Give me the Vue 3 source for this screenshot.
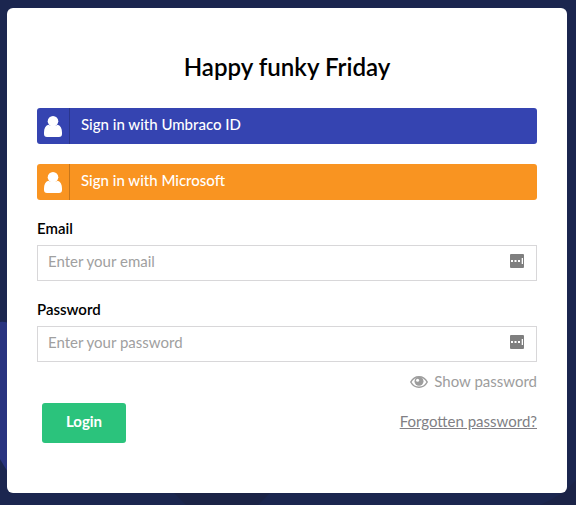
<script setup>
const providers = [
  { name: 'Umbraco ID', tone: 'indigo' },
  { name: 'Microsoft', tone: 'orange' },
]
const fields = [
  { id: 'email', label: 'Email', type: 'email', hint: 'Enter your email' },
  { id: 'password', label: 'Password', type: 'password', hint: 'Enter your password' },
]
</script>

<template>
  <div class="page">
    <svg class="backdrop" viewBox="0 0 576 505" aria-hidden="true">
      <path d="M0 322Q5 321 10 324V475Q5 468 0 459Z" fill="#293480" />
      <path d="M174 493H270L258 505H186Z" fill="#1b2346" />
      <path d="M540 505Q562 496 576 480V505Z" fill="#1b2347" />
    </svg>
    <main class="card">
      <h1>Happy funky Friday</h1>
      <div class="providers">
        <button v-for="p in providers" :key="p.name" class="provider" :class="p.tone" type="button">
          <span class="provider-icon">
            <svg width="18" height="21" viewBox="0 0 18 21" fill="#fff">
              <path d="M4.2 8.7Q9 11.4 13.8 8.7C16.6 9.6 18 12.6 18 16.6V18Q18 21 15 21H3Q0 21 0 18V16.6C0 12.6 1.4 9.6 4.2 8.7Z" />
              <ellipse cx="9" cy="5.3" rx="5.3" ry="5.3" />
            </svg>
          </span>
          <span class="provider-name">Sign in with {{ p.name }}</span>
        </button>
      </div>
      <form @submit.prevent>
        <div v-for="f in fields" :key="f.id" class="field">
          <label :for="f.id">{{ f.label }}</label>
          <div class="box">
            <input :id="f.id" :type="f.type" :placeholder="f.hint" />
            <svg class="manager" width="14" height="14" viewBox="0 0 14 14">
              <rect width="14" height="14" rx="1" fill="#7f7f7f" />
              <path d="M1 6h2v2H1zM4.5 6h2v2h-2zM8 6h2v2H8zM11.7 4h1.3v6h-1.3z" fill="#fff" />
            </svg>
          </div>
        </div>
        <div class="reveal">
          <svg width="18" height="12" viewBox="0 0 18 12">
            <path d="M0.8 6C4.5-1 13.5-1 17.2 6C13.5 13 4.5 13 0.8 6Z" fill="none" stroke="#9d9d9d" stroke-width="1.5" />
            <circle cx="9" cy="5.3" r="4.5" fill="#9d9d9d" />
            <circle cx="7.6" cy="4.3" r="1.5" fill="#fff" />
          </svg>
          <span>Show password</span>
        </div>
        <div class="actions">
          <button class="login" type="submit">Login</button>
          <a href="#">Forgotten password?</a>
        </div>
      </form>
    </main>
  </div>
</template>

<style>
body {
  background: #fff;
}
</style>

<style scoped>
* {
  box-sizing: border-box;
}
.page {
  position: relative;
  width: 576px;
  height: 505px;
  padding: 8px 9px 12px 7px;
  background: #1b264f;
  font: 15px/20px Lato, sans-serif;
  overflow: hidden;
}
.backdrop {
  position: absolute;
  inset: 0;
}
.card {
  position: relative;
  width: 560px;
  height: 485px;
  padding: 44px 30px 0;
  border-radius: 6px;
  background: #fff;
}
h1 {
  margin: 0;
  height: 56px;
  font-size: 24.1px;
  line-height: 30px;
  font-weight: 600;
  text-align: center;
  color: #000;
}
button {
  border: 0;
  padding: 0;
  font: inherit;
}
.providers {
  display: grid;
  gap: 20px;
}
.provider {
  display: flex;
  height: 36px;
  border-radius: 3px;
  color: #fff;
  text-align: left;
  font-weight: 500;
}
.indigo {
  background: #3544b1;
}
.orange {
  background: #f99421;
}
.provider-icon {
  width: 33px;
  height: 36px;
  padding: 8px 0 0 7px;
  border-right: 1px solid rgba(0, 0, 0, 0.2);
}
.provider-icon svg {
  display: block;
}
.provider-name {
  padding: 6px 0 0 11px;
}
form {
  padding-top: 18px;
}
.field {
  margin-bottom: 18px;
}
label {
  display: block;
  height: 27px;
  font-weight: 600;
  color: #000;
}
.box {
  display: flex;
  height: 36px;
  padding-right: 12px;
  border: 1px solid #d8d7d9;
}
input {
  flex: 1;
  min-width: 0;
  height: 30px;
  border: 0;
  padding: 0 10px;
  outline: 0;
  font: inherit;
  background: transparent;
}
input::placeholder {
  color: #a0a0a0;
  opacity: 1;
}
.manager {
  margin-top: 8px;
}
.reveal {
  display: flex;
  justify-content: flex-end;
  align-items: center;
  gap: 6px;
  margin-top: -9px;
  color: #9d9d9d;
}
.reveal svg {
  margin-top: 2px;
}
.actions {
  display: flex;
  justify-content: space-between;
  padding: 12px 0 0 5px;
}
.login {
  width: 84px;
  height: 40px;
  padding-bottom: 4px;
  border-radius: 3px;
  background: #2bc37c;
  color: #fff;
  font-weight: 700;
}
a {
  margin-top: 8px;
  color: #817f85;
  text-decoration: underline;
}
</style>
